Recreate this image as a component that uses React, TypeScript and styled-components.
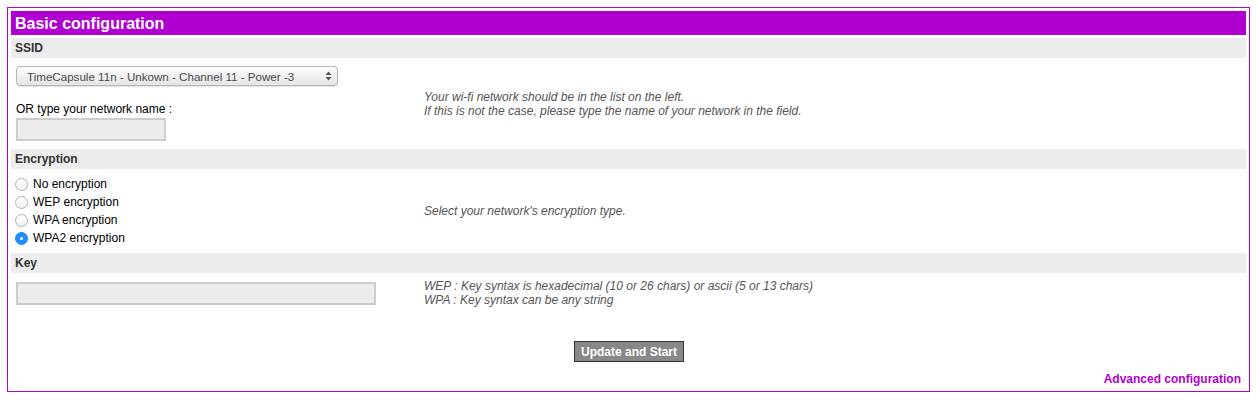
import React from "react";
import styled, { createGlobalStyle } from "styled-components";

const Global = createGlobalStyle`
  html, body { margin: 0; padding: 0; background: #fff; }
  body { font-family: "Liberation Sans", Arial, Helvetica, sans-serif; font-size: 12px; color: #000; }
`;

const Panel = styled.div`
  margin: 7px 6px 0 7px;
  border-width: 1px;
  border-style: solid;
  border-color: rgb(176, 0, 208);
  padding: 3px;
  display: flex;
  flex-direction: column;
  gap: 3px;
`;

const Title = styled.div`
  height: 24px;
  line-height: 25px;
  background: #b000d0;
  color: #fff;
  font-weight: bold;
  font-size: 16px;
  padding-left: 4px;
`;

const SectionBar = styled.div`
  height: 20px;
  line-height: 20px;
  background: #ececec;
  color: #333;
  font-weight: bold;
  font-size: 12px;
  padding-left: 4px;
`;

const Row = styled.div<{ $pad: number }>`
  display: grid;
  grid-template-columns: 413px 1fr;
  align-items: center;
  padding: ${(p) => p.$pad}px 0;
`;

const LeftCell = styled.div<{ $pad?: string }>`
  display: flex;
  flex-direction: column;
  align-items: flex-start;
  padding: ${(p) => p.$pad ?? "0 0 0 5px"};
`;

const Help = styled.div`
  font-style: italic;
  color: #555;
  line-height: 14px;
`;

const SelectWrap = styled.div`
  position: relative;
  width: 322px;
  height: 20px;
`;

const Select = styled.select`
  appearance: none;
  -webkit-appearance: none;
  width: 322px;
  height: 20px;
  box-sizing: border-box;
  border: 1px solid #b5b5b5;
  border-radius: 4px;
  background: linear-gradient(#fdfdfd, #e4e4e4);
  box-shadow: 0 1px 1px rgba(0, 0, 0, 0.12);
  padding: 0 20px 0 10px;
  font-family: "Liberation Sans", Arial, sans-serif;
  font-size: 11.6px;
  color: #4a4a4a;
  outline: none;
`;

const Arrows = styled.svg`
  position: absolute;
  right: 6px;
  top: 5px;
  pointer-events: none;
`;

const Label = styled.div<{ $top: number }>`
  margin-top: ${(p) => p.$top}px;
  line-height: 14px;
  color: #000;
`;

const TextBox = styled.input<{ $w: number; $top: number }>`
  width: ${(p) => p.$w}px;
  height: 23px;
  box-sizing: border-box;
  margin: ${(p) => p.$top}px 0 0 0;
  border: 2px solid #cdcdcd;
  background: #ececec;
  padding: 0 4px;
  font-family: "Liberation Sans", Arial, sans-serif;
  font-size: 12px;
  outline: none;
`;

const RadioLine = styled.label`
  display: flex;
  align-items: center;
  height: 18px;
  gap: 5px;
  color: #000;
  margin-left: -1px;
`;

const Radio = styled.input`
  appearance: none;
  -webkit-appearance: none;
  margin: 0;
  width: 13px;
  height: 13px;
  box-sizing: border-box;
  border-radius: 50%;
  border: 1px solid #b3b3b3;
  background: linear-gradient(#ffffff, #f0f0f0);
  position: relative;
  &:checked {
    border-color: #1a88f5;
    background: #1e8ffa;
  }
  &:checked::after {
    content: "";
    position: absolute;
    left: 4px;
    top: 4px;
    width: 3px;
    height: 3px;
    border-radius: 50%;
    background: #fff;
  }
`;

const ButtonRow = styled.div`
  display: flex;
  justify-content: center;
  margin-top: 28px;
`;

const Button = styled.button`
  width: 110px;
  height: 21px;
  border: 1px solid #333;
  background: #888;
  color: #fff;
  font-family: "Liberation Sans", Arial, sans-serif;
  font-weight: bold;
  font-size: 12px;
  padding: 0;
  margin-left: 1px;
`;

const LinkRow = styled.div`
  display: flex;
  justify-content: flex-end;
  padding: 7px 5px 2px 0;
`;

const Link = styled.a`
  color: #b000d0;
  font-weight: bold;
  font-size: 12px;
  line-height: 14px;
  text-decoration: none;
`;

const encryptions = [
  { id: "none", label: "No encryption" },
  { id: "wep", label: "WEP encryption" },
  { id: "wpa", label: "WPA encryption" },
  { id: "wpa2", label: "WPA2 encryption" },
];

export default function App() {
  return (
    <>
      <Global />
      <Panel>
        <Title>Basic configuration</Title>
        <SectionBar>SSID</SectionBar>
        <Row $pad={0}>
          <LeftCell $pad="5px 0 5px 5px">
            <SelectWrap>
              <Select defaultValue="tc">
                <option value="tc">TimeCapsule 11n - Unkown - Channel 11 - Power -3</option>
              </Select>
              <Arrows width="7" height="10" viewBox="0 0 7 10">
                <path d="M3.5 0.5 L6.5 4 L0.5 4 Z" fill="#555" />
                <path d="M3.5 9.5 L6.5 6 L0.5 6 Z" fill="#555" />
              </Arrows>
            </SelectWrap>
            <Label $top={16}>OR type your network name :</Label>
            <TextBox $w={150} $top={2} type="text" />
          </LeftCell>
          <Help>
            Your wi-fi network should be in the list on the left.
            <br />
            If this is not the case, please type the name of your network in the field.
          </Help>
        </Row>
        <SectionBar>Encryption</SectionBar>
        <Row $pad={3}>
          <LeftCell>
            {encryptions.map((e) => (
              <RadioLine key={e.id}>
                <Radio type="radio" name="enc" defaultChecked={e.id === "wpa2"} />
                {e.label}
              </RadioLine>
            ))}
          </LeftCell>
          <Help>Select your network's encryption type.</Help>
        </Row>
        <SectionBar>Key</SectionBar>
        <Row $pad={3}>
          <LeftCell>
            <TextBox $w={360} $top={0} type="text" />
          </LeftCell>
          <Help>
            WEP : Key syntax is hexadecimal (10 or 26 chars) or ascii (5 or 13 chars)
            <br />
            WPA : Key syntax can be any string
          </Help>
        </Row>
        <ButtonRow>
          <Button type="button">Update and Start</Button>
        </ButtonRow>
        <LinkRow>
          <Link href="#">Advanced configuration</Link>
        </LinkRow>
      </Panel>
    </>
  );
}
